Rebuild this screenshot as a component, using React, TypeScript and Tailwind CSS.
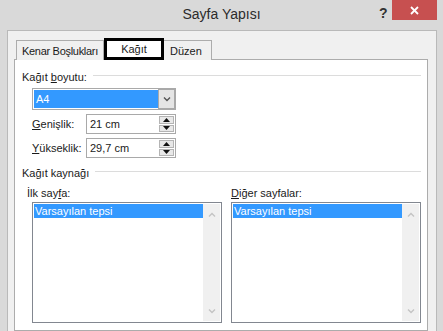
import React from "react";

const Chevron = ({ up, color }: { up?: boolean; color: string }) => (
  <svg width="8" height="5" viewBox="0 0 8 5" fill="none" stroke={color} strokeWidth={1.4}>
    <polyline points={up ? "1,4.5 4,1.5 7,4.5" : "1,0.5 4,3.5 7,0.5"} />
  </svg>
);

const Tri = ({ up }: { up?: boolean }) => (
  <svg width="7" height="4" viewBox="0 0 7 4" fill="#111">
    <polygon points={up ? "3.5,0 7,4 0,4" : "0,0 7,0 3.5,4"} />
  </svg>
);

const GroupHeader = ({ children }: { children: React.ReactNode }) => (
  <div className="flex items-center h-[16px]">
    <span className="whitespace-nowrap">{children}</span>
    <div className="flex-1 h-px bg-[#dcdcdc] ml-[6px] mt-[-3px]" />
  </div>
);

const SpinRow = ({ label, value }: { label: React.ReactNode; value: string }) => (
  <div className="flex items-center ml-[10px] mt-[4px]">
    <div className="w-[54px] whitespace-nowrap">{label}</div>
    <div className="w-[90px] h-[20px] border border-[#a9a9a9] flex bg-white">
      <div className="flex-1 pl-[3px] leading-[18px]">{value}</div>
      <div className="w-[17px] flex flex-col p-px gap-px">
        <div className="flex-1 bg-[#e8e8e8] border border-[#b4b4b4] flex items-center justify-center">
          <Tri up />
        </div>
        <div className="flex-1 bg-[#e8e8e8] border border-[#b4b4b4] flex items-center justify-center">
          <Tri />
        </div>
      </div>
    </div>
  </div>
);

const ListBox = () => (
  <div className="w-[190px] h-[121px] border border-[#828790] bg-white p-px flex">
    <div className="flex-1">
      <div className="bg-[#3399ff] text-white h-[14px] leading-[14px] pl-px whitespace-nowrap">Varsayılan tepsi</div>
    </div>
    <div className="w-[17px] bg-[#f0f0f0] flex flex-col items-center justify-between pt-[8px] pb-[7px]">
      <Chevron up color="#c4c4c4" />
      <Chevron color="#c4c4c4" />
    </div>
  </div>
);

export default function App() {
  return (
    <div className="w-[443px] h-[331px] overflow-hidden bg-[#d9d9d9] flex flex-col text-[11px] text-[#1a1a1a] font-['Liberation_Sans',sans-serif]">
      {/* title bar */}
      <div className="h-[30px] relative flex items-center justify-center shrink-0">
        <span className="text-[14px] text-[#2b2b2b] -mt-[2px]">Sayfa Yapısı</span>
        <span className="absolute left-[379px] top-[3px] text-[14px] font-bold text-[#333]">?</span>
        <div className="absolute left-[392px] top-0 w-[45px] h-[20px] bg-[#c75050] flex items-center justify-center">
          <svg width="9" height="9" viewBox="0 0 9 9" stroke="white" strokeWidth={1.8}>
            <line x1="1" y1="1" x2="8" y2="8" />
            <line x1="8" y1="1" x2="1" y2="8" />
          </svg>
        </div>
      </div>

      {/* client area */}
      <div className="flex-1 ml-[7px] mr-[6px] bg-[#f0f0f0] border-l border-t border-r border-[#b9b9b9] pt-[7px] pl-[6px] pr-[8px] flex flex-col">
        <div className="flex items-end h-[22px] pl-[2px] relative z-10 -mb-px">
          <div className="w-[88px] h-[20px] border border-b-0 border-[#acacac] bg-[#f0f0f0] pl-[5px] leading-[20px] whitespace-nowrap tracking-[-0.3px]">
            Kenar Boşlukları
          </div>
          <div className="w-[60px] h-[22px] border-[3px] border-black bg-white flex items-center justify-center pt-px">
            Kağıt
          </div>
          <div className="w-[48px] h-[20px] border border-b-0 border-l-0 border-[#acacac] bg-[#f0f0f0] pl-[6px] leading-[20px]">
            Düzen
          </div>
        </div>

        <div className="flex-1 bg-white border border-[#acacac] pl-[7px] pr-[6px] pt-[9px] flex flex-col">
          <GroupHeader>
            Kağıt <span className="underline">b</span>oyutu:
          </GroupHeader>

          <div className="ml-[10px] mt-[3px] w-[144px] h-[22px] border border-[#a9a9a9] flex p-px bg-white">
            <div className="flex-1 bg-[#3399ff] text-white pl-[2px] leading-[18px]">A4</div>
            <div className="w-[17px] -my-px -mr-px bg-[#e5e5e5] border border-[#a9a9a9] flex items-center justify-center">
              <Chevron color="#555" />
            </div>
          </div>

          <SpinRow
            label={
              <>
                <span className="underline">G</span>enişlik:
              </>
            }
            value="21 cm"
          />
          <SpinRow
            label={
              <>
                <span className="underline">Y</span>ükseklik:
              </>
            }
            value="29,7 cm"
          />

          <div className="mt-[7px]">
            <GroupHeader>Kağıt kaynağı</GroupHeader>
          </div>

          <div className="flex gap-[9px] ml-[10px] mt-[4px]">
            <div className="flex flex-col">
              <div className="h-[16px] -ml-[5px]">
                İlk say<span className="underline">f</span>a:
              </div>
              <div className="mt-px">
                <ListBox />
              </div>
            </div>
            <div className="flex flex-col">
              <div className="h-[16px]">
                <span className="underline">D</span>iğer sayfalar:
              </div>
              <div className="mt-px">
                <ListBox />
              </div>
            </div>
          </div>
        </div>
      </div>
    </div>
  );
}
